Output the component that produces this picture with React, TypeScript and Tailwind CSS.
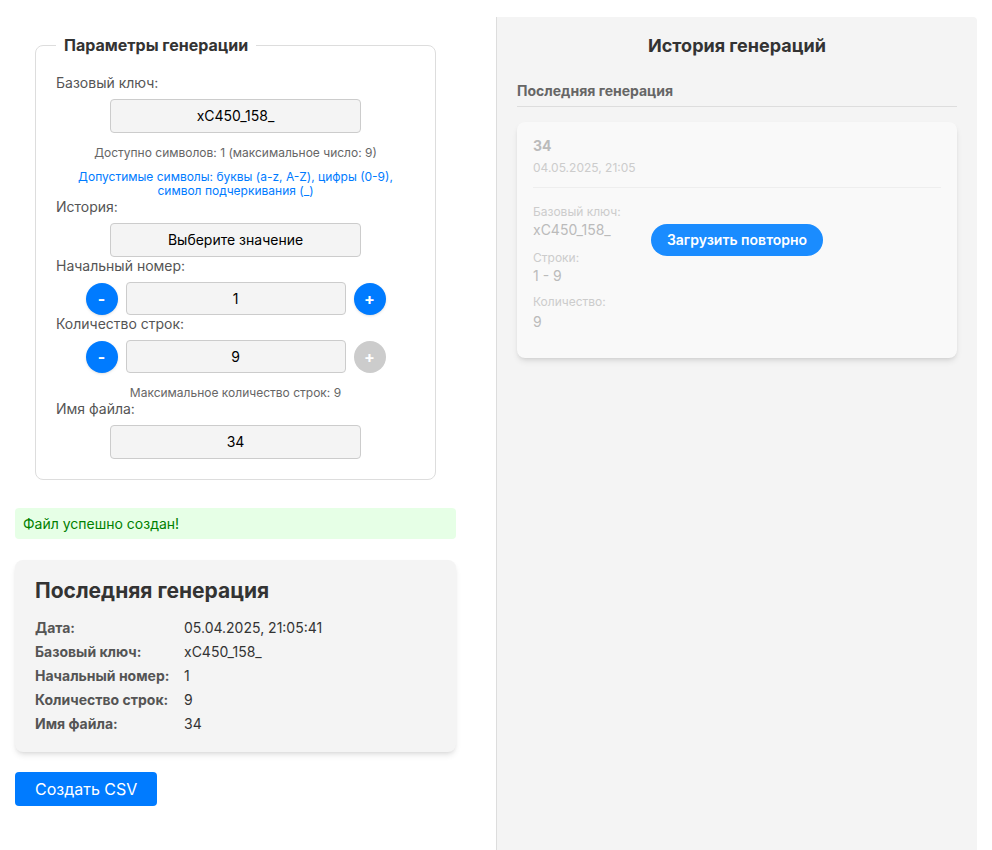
import React from 'react';

const font = { fontFamily: 'Inter, "Noto Sans", sans-serif' };

function Field({ label, children }: { label: string; children: React.ReactNode }) {
  return (
    <>
      <label className="block text-sm leading-[18px] text-[#555] mb-[7px]">{label}</label>
      {children}
    </>
  );
}

function TextBox({ value }: { value: string }) {
  return (
    <div className="mx-auto w-[251px] h-[34px] flex items-center justify-center bg-[#f4f4f4] border border-[#ccc] rounded text-sm text-black">
      {value}
    </div>
  );
}

function Stepper({ value, plusDisabled }: { value: string; plusDisabled?: boolean }) {
  return (
    <div className="flex items-center justify-center gap-2">
      <button className="w-8 h-8 rounded-full bg-[#007bff] text-white font-bold text-base leading-none flex items-center justify-center shadow-sm">
        -
      </button>
      <div className="w-[220px] h-[33px] flex items-center justify-center bg-[#f4f4f4] border border-[#ccc] rounded text-sm text-black">
        {value}
      </div>
      <button
        className={
          plusDisabled
            ? 'w-8 h-8 rounded-full bg-[#cccccc] text-white font-bold text-base leading-none flex items-center justify-center'
            : 'w-8 h-8 rounded-full bg-[#007bff] text-white font-bold text-base leading-none flex items-center justify-center shadow-sm'
        }
      >
        +
      </button>
    </div>
  );
}

const summary: [string, string][] = [
  ['Дата:', '05.04.2025, 21:05:41'],
  ['Базовый ключ:', 'xC450_158_'],
  ['Начальный номер:', '1'],
  ['Количество строк:', '9'],
  ['Имя файла:', '34'],
];

export default function App() {
  return (
    <div className="min-h-screen bg-white flex px-[15px] gap-[40px]" style={font}>
      {/* left column */}
      <div className="w-[441px] shrink-0 pt-[17px]">
        <fieldset className="mx-5 mt-[19px] border border-[#ddd] rounded-lg px-5 pt-[19px] pb-5">
          <legend className="px-2 text-base leading-[19px] font-bold text-[#333]">Параметры генерации</legend>

          <Field label="Базовый ключ:">
            <TextBox value="xC450_158_" />
          </Field>
          <p className="mt-[13px] text-xs leading-[14px] text-[#666] text-center">
            Доступно символов: 1 (максимальное число: 9)
          </p>
          <p className="mt-[10px] text-xs leading-[14px] text-[#007bff] text-center">
            Допустимые символы: буквы (a-z, A-Z), цифры (0-9),
            <br />
            символ подчеркивания (_)
          </p>

          <Field label="История:">
            <TextBox value="Выберите значение" />
          </Field>

          <Field label="Начальный номер:">
            <Stepper value="1" />
          </Field>

          <Field label="Количество строк:">
            <Stepper value="9" plusDisabled />
          </Field>
          <p className="mt-[13px] text-xs leading-[14px] text-[#666] text-center">Максимальное количество строк: 9</p>

          <Field label="Имя файла:">
            <TextBox value="34" />
          </Field>
        </fieldset>

        <div className="mt-[28px] h-[31px] flex items-center px-2 bg-[#e6ffe6] rounded text-sm text-[#008000]">
          Файл успешно создан!
        </div>

        <div className="mt-[21px] bg-[#f4f4f4] rounded-lg shadow-md px-5 pt-[19px] pb-4">
          <h2 className="text-[21px] leading-6 font-bold text-[#333] mb-[13px]">Последняя генерация</h2>
          <div className="grid grid-cols-[149px_1fr] text-sm leading-6">
            {summary.map(([k, v]) => (
              <React.Fragment key={k}>
                <span className="font-bold text-[#555]">{k}</span>
                <span className="text-[#333]">{v}</span>
              </React.Fragment>
            ))}
          </div>
        </div>

        <button className="mt-5 h-[34px] px-5 bg-[#007bff] text-white text-base rounded">Создать CSV</button>
      </div>

      {/* right column */}
      <div className="w-[481px] shrink-0 mt-[17px] bg-[#f4f4f4] border-l border-[#ddd] rounded-tr px-5 pt-[18px] min-h-[833px]">
        <h2 className="text-lg leading-[22px] font-bold text-[#333] text-center">История генераций</h2>
        <h3 className="mt-[25px] text-sm leading-[17px] font-bold text-[#666] pb-[7px] border-b border-[#ddd]">
          Последняя генерация
        </h3>

        <div className="relative mt-[15px] bg-[#f9f9f9] rounded-lg shadow-md px-4 pt-[15px] pb-[26px]">
          <div className="text-sm leading-[17px] font-bold text-[#bbb]">34</div>
          <div className="mt-[6px] text-xs leading-[16px] text-[#ccc]">04.05.2025, 21:05</div>
          <div className="mt-[11px] border-t border-[#eee]" />
          <div className="mt-4 text-xs leading-4 text-[#ccc]">Базовый ключ:</div>
          <div className="text-sm leading-5 text-[#bbb]">xC450_158_</div>
          <div className="mt-[10px] text-xs leading-4 text-[#ccc]">Строки:</div>
          <div className="text-sm leading-5 text-[#bbb]">1 - 9</div>
          <div className="mt-2 text-xs leading-4 text-[#ccc]">Количество:</div>
          <div className="text-sm leading-5 text-[#bbb] pt-[2px]">9</div>

          <div className="absolute inset-0 flex items-center justify-center">
            <button className="h-8 px-4 rounded-full bg-[#1a8cff] text-white text-sm font-semibold">
              Загрузить повторно
            </button>
          </div>
        </div>
      </div>
    </div>
  );
}
